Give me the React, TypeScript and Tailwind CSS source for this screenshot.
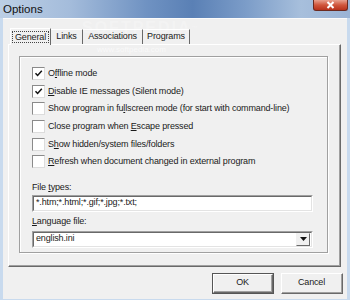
import React from "react";

const Check = ({ checked }: { checked?: boolean }) => (
  <span className="w-[13px] h-[13px] shrink-0 bg-white border border-t-[#8a8a8a] border-l-[#8a8a8a] border-r-[#dcdcdc] border-b-[#dcdcdc] flex items-center justify-center">
    {checked && (
      <svg width="9" height="9" viewBox="0 0 9 9">
        <path d="M1.5 4.2 L3.6 6.4 L7.8 1.8" stroke="#111" strokeWidth="1.5" fill="none" />
      </svg>
    )}
  </span>
);

const Row = ({ checked, children }: { checked?: boolean; children: React.ReactNode }) => (
  <div className="h-[17.6px] flex items-center gap-[2px] whitespace-nowrap min-w-0">
    <Check checked={checked} />
    <span className="pl-[1px] leading-none">{children}</span>
  </div>
);

const U = ({ children }: { children: React.ReactNode }) => (
  <span className="underline underline-offset-[1px]">{children}</span>
);

const Sunken = ({ children }: { children: React.ReactNode }) => (
  <div className="h-[17px] border-t border-l border-t-[#a0a0a0] border-l-[#a0a0a0] border-b border-r border-b-white border-r-white">
    <div className="h-full bg-white border-t border-l border-t-[#696969] border-l-[#696969] border-b border-r border-b-[#e3e3e3] border-r-[#e3e3e3] flex items-center">
      {children}
    </div>
  </div>
);

const Button = ({ label, def }: { label: string; def?: boolean }) => (
  <div className={`w-[62px] h-[21px] ${def ? "border border-[#555]" : ""}`}>
    <div className="h-full border-t border-l border-t-white border-l-white border-b border-r border-b-[#696969] border-r-[#696969]">
      <div className="h-full bg-[#f0f0f0] border-b border-r border-b-[#a0a0a0] border-r-[#a0a0a0] flex items-center justify-center">
        {label}
      </div>
    </div>
  </div>
);

const Tab = ({ w, children }: { w: string; children: React.ReactNode }) => (
  <div className={`${w} h-[15px] flex items-center justify-center border-t border-t-white border-r border-r-[#696969]`}>
    {children}
  </div>
);

export default function App() {
  return (
    <div className="w-[350px] h-[300px] relative overflow-hidden bg-[#c8daee] font-['Liberation_Sans',sans-serif] text-[9px] tracking-[-0.15px] text-[#1a1a1a] flex flex-col">
      {/* title bar */}
      <div className="h-[18px] shrink-0 flex items-start justify-between bg-[linear-gradient(90deg,#bccfe5_0%,#a4bcdb_20%,#6f92c2_42%,#5a80b5_55%,#7b9cc8_70%,#a7bfdc_86%,#9ab3d5_100%)]">
        <span className="pl-[3px] pt-[2px] text-[11.5px] tracking-normal leading-[14px] text-[#111]">Options</span>
        <div className="mr-[2px] w-[35px] h-[11px] rounded-b-[3px] border border-t-0 border-[#6b2a20] bg-[linear-gradient(180deg,#e8a08e_0%,#d0563c_50%,#b8321c_100%)] flex items-center justify-center">
          <svg width="9" height="8" viewBox="0 0 9 8">
            <path d="M1.5 1 L7.5 7 M7.5 1 L1.5 7" stroke="#fff" strokeWidth="2" />
          </svg>
        </div>
      </div>

      <div className="flex-1 flex px-[3px] pb-[3px] min-w-0">
        <div className="flex-1 min-w-0 bg-[#f0f0f0] border-t border-t-[#fbfbfb] flex flex-col pl-[5px] pr-[6px] pt-[8px] pb-[5px]">
          {/* tabs */}
          <div className="h-[17px] flex items-end pl-[2px] relative z-10">
            <div className="w-[41px] h-[17px] -mb-px pt-[2px] flex justify-center bg-[#f0f0f0] border-t border-l border-t-white border-l-white border-r border-r-[#696969]">
              <span className="h-[12px] px-[2px] leading-[10px] border border-dotted border-[#444]">General</span>
            </div>
            <Tab w="w-[32px]">Links</Tab>
            <Tab w="w-[60px]">Associations</Tab>
            <Tab w="w-[47px]">Programs</Tab>
          </div>

          {/* panel */}
          <div className="h-[223px] border-t border-l border-t-white border-l-white border-b border-r border-b-[#696969] border-r-[#696969]">
            <div className="h-full border-b border-r border-b-[#a0a0a0] border-r-[#a0a0a0] pl-[10px] pr-[11px] pt-[11px]">
              {/* group box */}
              <div className="h-[197px] border border-[#a0a0a0] shadow-[inset_1px_1px_0_#fff,1px_1px_0_#fff] pl-[12px] pr-[14px] pt-[8px]">
                <Row checked>O<U>f</U>fline mode</Row>
                <Row checked><U>D</U>isable IE messages (Silent mode)</Row>
                <Row>Show program in fu<U>l</U>lscreen mode (for start with command-line)</Row>
                <Row>Close program when <U>E</U>scape pressed</Row>
                <Row>S<U>h</U>ow hidden/system files/folders</Row>
                <Row><U>R</U>efresh when document changed in external program</Row>

                <div className="mt-[10px] h-[13px] leading-[13px]">File <U>t</U>ypes:</div>
                <div className="mt-[1px]">
                  <Sunken>
                    <span className="pl-[2px]">*.htm;*.html;*.gif;*.jpg;*.txt;</span>
                  </Sunken>
                </div>
                <div className="mt-[3px] h-[13px] leading-[13px]"><U>L</U>anguage file:</div>
                <div className="mt-[3px]">
                  <Sunken>
                    <span className="flex-1 pl-[2px]">english.ini</span>
                    <div className="w-[14px] h-[13px] mr-px border-t border-l border-t-[#f0f0f0] border-l-[#f0f0f0] border-b border-r border-b-[#696969] border-r-[#696969] bg-[#f0f0f0] flex items-center justify-center">
                      <svg width="7" height="4" viewBox="0 0 7 4">
                        <path d="M0 0 H7 L3.5 4 Z" fill="#111" />
                      </svg>
                    </div>
                  </Sunken>
                </div>
              </div>
            </div>
          </div>

          {/* buttons */}
          <div className="mt-[6px] -mr-[2px] flex justify-end gap-[7px]">
            <Button label="OK" def />
            <Button label="Cancel" />
          </div>
        </div>
      </div>

      {/* watermark */}
      <div className="absolute left-[82px] top-[16px] text-[16px] font-bold tracking-[2px] text-white/25 pointer-events-none">SOFTPEDIA<sup className="text-[6px]">™</sup></div>
      <div className="absolute left-[97px] top-[44px] text-[8px] tracking-normal text-white/60 pointer-events-none">www.softpedia.com</div>
    </div>
  );
}
